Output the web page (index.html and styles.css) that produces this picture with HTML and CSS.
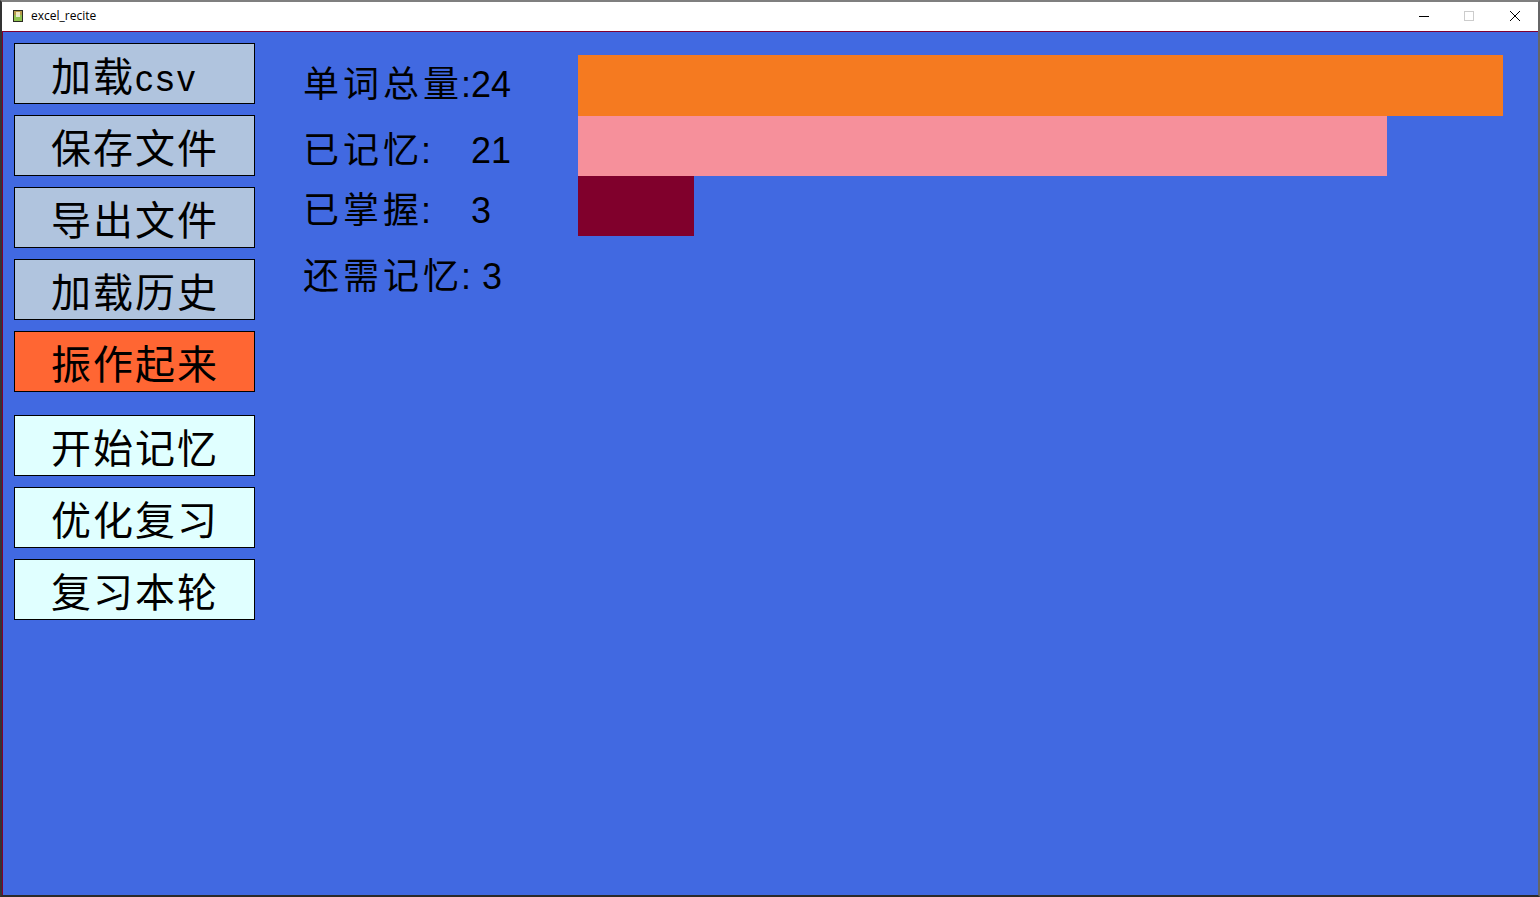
FILE: index.html
```html
<!DOCTYPE html>
<html lang="zh-CN">
<head>
    <meta charset="UTF-8">
    <meta name="viewport" content="width=device-width, initial-scale=1.0">
    <title>excel_recite</title>
    <link rel="stylesheet" href="styles.css">
</head>
<body>
    <div class="window">
        <div class="titlebar">
            <svg class="app-icon" width="10" height="12" viewBox="0 0 10 12">
                <rect width="10" height="12" fill="#2b2b22"/>
                <rect x="1" y="1" width="8" height="4" fill="#b59a4a"/>
                <rect x="3" y="2" width="4" height="3" fill="#f0e8c0"/>
                <rect x="1" y="5" width="8" height="6" fill="#8fc24f"/>
                <rect x="3" y="5" width="4" height="2" fill="#e8e8d0"/>
            </svg>
            <span class="app-name">excel_recite</span>
            <div class="win-controls">
                <div class="win-btn">
                    <svg width="12" height="12" viewBox="0 0 12 12"><path d="M2 6.5h10" stroke="#000" fill="none"/></svg>
                </div>
                <div class="win-btn">
                    <svg width="12" height="12" viewBox="0 0 12 12"><rect x="1.5" y="1.5" width="9" height="9" stroke="#ccc" fill="none"/></svg>
                </div>
                <div class="win-btn">
                    <svg width="12" height="12" viewBox="0 0 12 12"><path d="M1 1l10 10M11 1L1 11" stroke="#000" fill="none"/></svg>
                </div>
            </div>
        </div>
        <div class="content">
            <div class="sidebar">
                <button class="btn"><span class="cjk">加载</span><span class="latin">csv</span></button>
                <button class="btn"><span class="cjk">保存文件</span></button>
                <button class="btn"><span class="cjk">导出文件</span></button>
                <button class="btn"><span class="cjk">加载历史</span></button>
                <button class="btn btn-alert"><span class="cjk">振作起来</span></button>
                <button class="btn btn-light btn-first"><span class="cjk">开始记忆</span></button>
                <button class="btn btn-light"><span class="cjk">优化复习</span></button>
                <button class="btn btn-light"><span class="cjk">复习本轮</span></button>
            </div>
            <div class="stats">
                <div class="stat stat-total"><span class="cjk">单词总量</span>:24</div>
                <div class="stat stat-learned"><span class="cjk">已记忆</span>:<span class="num">21</span></div>
                <div class="stat stat-mastered"><span class="cjk">已掌握</span>:<span class="num">3</span></div>
                <div class="stat stat-left"><span class="cjk">还需记忆</span>:<span class="num num-near">3</span></div>
            </div>
            <div class="bars">
                <div class="bar bar-total" style="width: 925px"></div>
                <div class="bar bar-learned" style="width: 809px"></div>
                <div class="bar bar-mastered" style="width: 116px"></div>
            </div>
        </div>
    </div>
</body>
</html>
```

FILE: styles.css
```css
html, body {
    margin: 0;
    padding: 0;
    height: 100%;
    overflow: hidden;
}
body {
    font-family: "Liberation Sans", "Noto Sans CJK SC", sans-serif;
    color: #000;
}
.window {
    height: 897px;
    box-sizing: border-box;
    border-top: 2px solid #7f7f7f;
    border-left: 2px solid #333;
    border-right: 2px solid #666;
    border-bottom: 2px solid #2a2a2a;
    display: flex;
    flex-direction: column;
}
.titlebar {
    height: 29px;
    box-sizing: border-box;
    padding: 0 0 2px 11px;
    background: #fff;
    display: flex;
    align-items: center;
    flex-shrink: 0;
}
.app-icon {
    margin-right: 8px;
}
.app-name {
    font-family: "Open Sans", sans-serif;
    font-size: 12px;
}
.win-controls {
    margin-left: auto;
    display: flex;
}
.win-btn {
    width: 46px;
    display: flex;
    justify-content: center;
    align-items: center;
}
.content {
    flex: 1;
    background: #4169e1;
    border-top: 1px solid #800030;
    border-left: 1px solid #800030;
    display: flex;
}
.sidebar {
    width: 241px;
    padding: 11px 0 0 11px;
    display: flex;
    flex-direction: column;
    gap: 11px;
}
.btn {
    height: 61px;
    box-sizing: border-box;
    padding: 0 0 0 36px;
    margin: 0;
    border: 1px solid #000;
    border-radius: 0;
    background: #b0c4de;
    color: #000;
    font-family: inherit;
    font-size: 40px;
    line-height: 67px;
    text-align: left;
    white-space: nowrap;
}
.btn .cjk {
    letter-spacing: 2px;
}
.btn .latin {
    font-size: 36px;
    letter-spacing: 3px;
}
.btn-alert {
    background: #ff6633;
}
.btn-light {
    background: #e0ffff;
}
.btn-first {
    margin-top: 12px;
}
.stats {
    width: 275px;
    margin-left: 48px;
    padding-top: 30px;
    flex-shrink: 0;
}
.stat {
    font-size: 36px;
    line-height: 46px;
    white-space: nowrap;
}
.stat .cjk {
    margin-right: -2px;
    letter-spacing: 4px;
}
.stat .num {
    margin-left: 40px;
}
.stat .num-near {
    margin-left: 11px;
}
.stat-learned {
    margin-top: 20px;
}
.stat-mastered {
    margin-top: 14px;
}
.stat-left {
    margin-top: 20px;
}
.bars {
    padding-top: 23px;
    display: flex;
    flex-direction: column;
}
.bar {
    height: 60px;
}
.bar-total {
    height: 61px;
    background: #f57a20;
}
.bar-learned {
    background: #f6909b;
}
.bar-mastered {
    background: #80002c;
}
```
